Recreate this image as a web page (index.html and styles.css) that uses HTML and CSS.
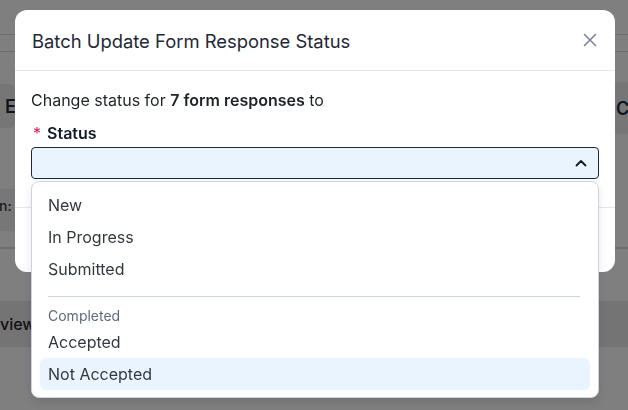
FILE: index.html
```html
<!DOCTYPE html>
<html lang="en">
<head>
    <meta charset="UTF-8">
    <meta name="viewport" content="width=device-width, initial-scale=1.0">
    <title>Batch update</title>
    <link rel="stylesheet" href="styles.css">
</head>
<body>
    <!-- dimmed page behind the modal -->
    <div class="page">
        <div class="topbar"></div>
        <div class="subnav"></div>
        <div class="cards">
            <div class="card card-left"><span class="card-title">E</span></div>
            <div class="card card-right"><span class="card-title">C</span></div>
        </div>
        <div class="meta-row">
            <span class="meta-text">n:</span><span class="tag"></span>
        </div>
        <div class="rule"></div>
        <div class="section-bar">
            <span class="section-text">view</span>
        </div>
    </div>

    <div class="modal">
        <div class="modal-header">
            <p class="modal-title">Batch Update Form Response Status</p>
            <button class="close-btn" aria-label="Close">
                <svg width="14" height="14" viewBox="0 0 14 14" fill="none" stroke="currentColor" stroke-width="1.6" stroke-linecap="round">
                    <path d="M1.5 1.5 L12.5 12.5 M12.5 1.5 L1.5 12.5"/>
                </svg>
            </button>
        </div>
        <div class="modal-body">
            <p class="lead">Change status for <strong>7 form responses</strong> to</p>
            <label class="field-label"><span class="req">*</span>Status</label>
            <div class="select">
                <svg class="chevron" width="14" height="14" viewBox="0 0 14 14" fill="none" stroke="currentColor" stroke-width="1.8" stroke-linecap="round" stroke-linejoin="round">
                    <path d="M2.5 9.5 L7 5 L11.5 9.5"/>
                </svg>
            </div>
        </div>
        <div class="modal-footer"></div>
    </div>

    <div class="dropdown">
        <div class="option">New</div>
        <div class="option">In Progress</div>
        <div class="option">Submitted</div>
        <div class="divider"></div>
        <div class="group-label">Completed</div>
        <div class="option">Accepted</div>
        <div class="option active">Not Accepted</div>
    </div>
</body>
</html>
```

FILE: styles.css
```css
/* Reset */
* {
    margin: 0;
    padding: 0;
    box-sizing: border-box;
}

body {
    font-family: Inter, "Noto Sans", sans-serif;
    background-color: #7f7f7f;
    width: 628px;
    height: 410px;
    overflow: hidden;
}

/* Background page (already dimmed) */
.page {
    width: 628px;
}

.topbar {
    height: 35px;
    border-bottom: 1px solid #6c6c6c;
}

.subnav {
    height: 17px;
    border-bottom: 1px solid #6c6c6c;
}

.cards {
    display: flex;
    justify-content: space-between;
    margin-top: 30px;
    height: 52px;
}

.card {
    background-color: #767676;
    display: flex;
    align-items: center;
    overflow: hidden;
}

.card-left {
    width: 45px;
    height: 44px;
    margin-top: 2px;
    margin-left: -30px;
    border-radius: 6px;
    padding-left: 35px;
}

.card-right {
    width: 13px;
    height: 52px;
    padding-left: 1px;
}

.card-title {
    font-size: 18px;
    font-weight: 600;
    color: #10151c;
    white-space: nowrap;
}

.meta-row {
    margin-top: 55px;
    height: 42px;
    width: 30px;
    background-color: #777777;
    display: flex;
    align-items: center;
    gap: 3px;
    overflow: hidden;
}

.meta-text {
    font-size: 14px;
    font-weight: 500;
    color: #1a1a1a;
    margin-top: -9px;
    margin-left: -1px;
    white-space: nowrap;
}

.tag {
    width: 3px;
    height: 12px;
    margin-top: -9px;
    background-color: #8a5a1a;
}

.rule {
    margin-top: 16px;
    border-bottom: 2px solid #6e6e6e;
}

.section-bar {
    margin-top: 52px;
    height: 46px;
    background-color: #747474;
    display: flex;
    align-items: center;
    overflow: hidden;
}

.section-text {
    font-size: 16px;
    font-weight: 500;
    color: #111;
}

/* Modal */
.modal {
    position: fixed;
    top: 10px;
    left: 15px;
    width: 600px;
    height: 262px;
    background-color: #ffffff;
    border-radius: 12px;
    display: flex;
    flex-direction: column;
}

.modal-header {
    height: 61px;
    display: flex;
    align-items: center;
    justify-content: space-between;
    padding: 0 17px 0 17px;
    border-bottom: 1px solid #e5e7eb;
}

.modal-title {
    font-size: 18.4px;
    color: #1f2937;
    padding-top: 1px;
}

.close-btn {
    background: none;
    border: none;
    color: #7b8591;
    width: 14px;
    height: 14px;
    display: flex;
    margin-right: 1px;
}

.modal-body {
    height: 136px;
    padding: 18px 16px 0 16px;
}

.lead {
    font-size: 16px;
    line-height: 22px;
    color: #1f2328;
}

.lead strong {
    font-weight: 600;
}

.field-label {
    display: flex;
    align-items: center;
    margin-top: 11px;
    font-size: 16px;
    line-height: 22px;
    font-weight: 600;
    color: #111827;
}

.req {
    color: #e11d48;
    font-weight: 400;
    margin: 0 6px 0 2px;
}

.select {
    margin-top: 3px;
    height: 32px;
    background-color: #eaf4fe;
    border: 1px solid #1f2937;
    border-radius: 4px;
    display: flex;
    align-items: center;
    justify-content: flex-end;
    padding-right: 10px;
}

.chevron {
    color: #111827;
}

.modal-footer {
    flex: 1;
    border-top: 1px solid #e5e7eb;
}

/* Open dropdown lies over the modal */
.dropdown {
    position: absolute;
    top: 181px;
    left: 31px;
    width: 568px;
    background-color: #ffffff;
    border: 1px solid #cbd5e1;
    border-radius: 8px;
    box-shadow: 0 4px 10px rgba(0, 0, 0, 0.1);
    padding: 7px 8px;
}

.option {
    height: 32px;
    line-height: 33px;
    padding-left: 8px;
    font-size: 16px;
    color: #333840;
    border-radius: 6px;
}

.option.active {
    background-color: #eaf4fe;
}

.divider {
    margin: 11px 10px 0 8px;
    border-top: 1px solid #cbd5e1;
}

.group-label {
    padding: 10px 8px 1px 8px;
    line-height: 18px;
    font-size: 14px;
    color: #5f6b7a;
}
```
